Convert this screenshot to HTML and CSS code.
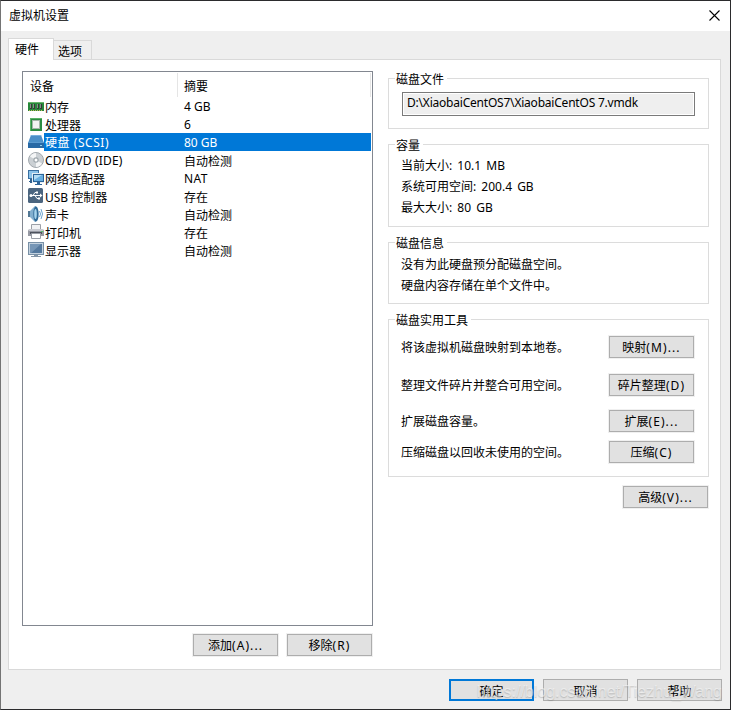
FILE: index.html
```html
<!DOCTYPE html>
<html lang="zh-CN">
<head>
<meta charset="utf-8">
<title>虚拟机设置</title>
<link rel="stylesheet" href="styles.css">
</head>
<body>
<div class="window">
  <header class="titlebar">
    <h1>虚拟机设置</h1>
    <svg class="close" viewBox="0 0 11 11" width="11" height="11"><path d="M.5 .5l10 10M10.500 .5l-10 10"/></svg>
  </header>
  <nav class="tabs">
    <div class="tab active">硬件</div>
    <div class="tab">选项</div>
  </nav>
  <main class="panel">
    <section class="devices">
      <div class="list">
        <div class="list-head"><span class="col-name">设备</span><span class="col-sum">摘要</span></div>
        <div class="row">
          <svg viewBox="0 0 16 16"><path fill="#27873b" d="M0 4h16v9H0z"/><path fill="#67b66b" d="M0 4h16v1H0z"/><path fill="#343b36" d="M2 6h2v5H2zM5 6h2v5H5zM9 6h2v5H9zM12 6h2v5h-2z"/><path fill="#849187" d="M2 6h1v4H2zM5 6h1v4H5zM9 6h1v4H9zM12 6h1v4h-1z"/><path stroke="#bdb75c" stroke-dasharray="1 1" d="M1 12.500h14"/></svg>
          <span class="name">内存</span><span class="sum latin">4 GB</span></div>
        <div class="row">
          <svg viewBox="0 0 16 16"><path fill="#2c8d42" d="M2 2h12v13H2z"/><path fill="#5bb267" d="M2 2h12v1H3v12H2z"/><path fill="#a4b5a8" d="M4 4h8v9H4z"/><path fill="#f2f3f2" d="M5 5h6v7H5z"/></svg>
          <span class="name">处理器</span><span class="sum latin">6</span></div>
        <div class="row selected">
          <svg viewBox="0 0 16 16"><path fill="#4b8fc8" d="M3 1h10l3 8H0z"/><path fill="#77afdd" d="M3 1h10l.5 1h-11z"/><path fill="#2869a5" d="M0 8h16v6H0z"/><path fill="#5b9bd0" d="M0 8h16v1H0z"/><path fill="#8bd2ed" d="M12 11h2v1h-2z"/></svg>
          <span class="name latin scsi">硬盘 (SCSI)</span><span class="sum latin">80 GB</span></div>
        <div class="row">
          <svg viewBox="0 0 16 16"><circle cx="8" cy="8" r="7.500" fill="#cbd0d4" stroke="#a2a8ad"/><path fill="#f4f5f6" d="M8 8L2 4.500A7 7 0 0 1 8 1zM8 8l6 3.500A7 7 0 0 1 8 15z"/><circle cx="8" cy="8" r="2.700" fill="#9fa7ad"/><circle cx="8" cy="8" r="1.500" fill="#fff"/></svg>
          <span class="name latin cd">CD/DVD (IDE)</span><span class="sum">自动检测</span></div>
        <div class="row">
          <svg viewBox="0 0 16 16"><path fill="#386fa2" d="M0 0h11v9H0z"/><path fill="#8bc2e9" d="M1 1h9v7H1z"/><path fill="#30618f" d="M2 9h2v2h2v2H2v-1H1v-1h1z"/><path fill="#e5eef5" d="M4 3h12v10H4z"/><path fill="#2c6498" d="M5 4h11v8H5zM9 12h3v2h2v1H7v-1h2z"/><path fill="#67aee0" d="M6 5h9v6H6z"/><path fill="#b2dcf5" d="M6 5h8l-8 5z"/></svg>
          <span class="name">网络适配器</span><span class="sum latin nat">NAT</span></div>
        <div class="row">
          <svg viewBox="0 0 16 16"><rect width="15" height="15" x="0" y="0" rx="1.500" fill="#4b657f"/><path fill="none" stroke="#fff" d="M2 7.500h11M5 7.500l2-3h2M7 7.500l2 3h2"/><circle cx="3" cy="7.500" r="1.500" fill="#fff"/><path fill="#fff" d="M12 5.500l2.500 2-2.500 2zM8 3.500h2v2H8zM10 9.500h2v2h-2z"/></svg>
          <span class="name">USB 控制器</span><span class="sum">存在</span></div>
        <div class="row">
          <svg viewBox="0 0 16 16"><path fill="#517794" d="M0 5h3v6H0z"/><path fill="#83afcf" d="M2 5l5-5h1v16H7l-5-5z"/><ellipse cx="8" cy="8" rx="2.700" ry="7.500" fill="#316b98"/><ellipse cx="7.500" cy="8" rx="1.300" ry="5" fill="#a7d4ed"/><path fill="none" stroke="#6ca4cf" d="M11.500 5q2 3 0 6M13 3q3 5 0 10"/></svg>
          <span class="name">声卡</span><span class="sum">自动检测</span></div>
        <div class="row">
          <svg viewBox="0 0 16 16"><path fill="#f1f2f4" stroke="#9ca0a7" d="M3.500 .5h9v5h-9z"/><path fill="#9699a3" d="M1 5h14l1 2v5H0V7z"/><path fill="#c8cad1" d="M1 5h14v2H1z"/><path fill="#4e535d" d="M2 8h12v2H2z"/><path fill="#fff" stroke="#9a9ea6" d="M3.500 9.500h9v5h-9z"/><path fill="#52c569" d="M13 7h2v1h-2z"/></svg>
          <span class="name">打印机</span><span class="sum">存在</span></div>
        <div class="row">
          <svg viewBox="0 0 16 16"><path fill="#7890a6" d="M0 0h16v13H0z"/><path fill="#c4d2df" d="M1 1h14v11H1z"/><path fill="#55799e" d="M2 2h12v9H2z"/><path fill="#7696b6" d="M2 2h11L3 11H2z"/><path fill="#8496a8" d="M6 13h4v1h3v1H3v-1h3z"/></svg>
          <span class="name">显示器</span><span class="sum">自动检测</span></div>
      </div>
      <div class="actions"><button>添加<span>(A)...</span></button><button>移除<span>(R)</span></button></div>
    </section>
    <section class="details">
      <div class="group file"><h2>磁盘文件</h2><div class="path"><span>D:\XiaobaiCentOS7\XiaobaiCentOS 7.vmdk</span></div></div>
      <div class="group capacity"><h2>容量</h2><p>当前大小: 10.1 MB</p><p>系统可用空间: 200.4 GB</p><p>最大大小: 80 GB</p></div>
      <div class="group info"><h2>磁盘信息</h2><p>没有为此硬盘预分配磁盘空间。</p><p>硬盘内容存储在单个文件中。</p></div>
      <div class="group tools"><h2>磁盘实用工具</h2>
        <div class="tool"><span>将该虚拟机磁盘映射到本地卷。</span><button>映射<span>(M)...</span></button></div>
        <div class="tool"><span>整理文件碎片并整合可用空间。</span><button>碎片整理<span>(D)</span></button></div>
        <div class="tool"><span>扩展磁盘容量。</span><button>扩展<span>(E)...</span></button></div>
        <div class="tool"><span>压缩磁盘以回收未使用的空间。</span><button>压缩<span>(C)</span></button></div>
      </div>
      <button class="advanced">高级<span>(V)...</span></button>
    </section>
  </main>
  <footer class="footer"><button class="default">确定</button><button>取消</button><button>帮助</button>
    <span class="watermark">https://blog.csdn.net/Tiezhu_Wang</span></footer>
</div>
</body>
</html>
```
FILE: styles.css
```css
* { box-sizing: border-box; }
body { margin: 0; color: #000; font: 12px/18px "Noto Sans", "Noto Sans CJK SC", sans-serif; }
h1, h2, p { margin: 0; font-size: 12px; font-weight: 400; }
span, p, h1, h2, button { white-space: nowrap; }
.window { width: 731px; height: 710px; background: #efefef; border: 1px solid #2b2b2d; border-left-color: #747474; overflow: hidden; }
.titlebar { height: 30px; background: #fff; display: flex; justify-content: space-between; align-items: center; padding: 0 10px 1px 8px; }
.close { fill: none; stroke: #000; stroke-width: 1.1; }
.tabs { display: flex; align-items: flex-end; height: 28px; padding-left: 7px; position: relative; z-index: 1; }
.tab { width: 38px; height: 20px; padding-left: 4px; border: 1px solid #d9d9d9; border-left: 0; line-height: 21px; margin-bottom: -1px; }
.tab.active { width: 46px; height: 22px; padding-left: 6px; background: #fff; border: 1px solid #d9d9d9; border-bottom: 0; line-height: 21px; }
.panel { width: 713px; height: 611px; margin-left: 7px; background: #fff; border: 1px solid #d9d9d9; display: flex; gap: 15px; padding: 11px 11px 0 13px; }
.devices { width: 351px; }
.list { height: 555px; border: 1px solid #828790; padding: 1px; }
.list-head { display: flex; height: 24px; line-height: 28px; }
.col-name { width: 154px; padding-left: 6px; border-right: 1px solid #e5e5e5; }
.col-sum { flex: 1; padding-left: 6px; border-right: 1px solid #e5e5e5; }
.row { display: flex; height: 18px; padding-left: 4px; line-height: 22px; }
.row svg { width: 16px; height: 16px; margin-top: 1px; flex: none; }
.name { width: 134px; padding-left: 1px; height: 18px; }
.sum { flex: 1; padding-left: 6px; height: 18px; }
.latin { line-height: 20px; }
.selected .name, .selected .sum { background: #0078d7; color: #fff; }
.scsi { letter-spacing: .55px; }
.cd { letter-spacing: .2px; }
.nat { letter-spacing: .4px; }
.actions { display: flex; justify-content: flex-end; gap: 9px; margin: 8px 1px 0 0; }
button { width: 85px; height: 22px; flex: none; padding: 0; border: 1px solid #adadad; background: #e1e1e1; box-shadow: 0 0 0 1px #f0f0f0; color: #000; font: inherit; line-height: 21px; }
button span { letter-spacing: 1.1px; }
.details { width: 321px; padding-top: 7px; display: flex; flex-direction: column; }
.group { border: 1px solid #dcdcdc; padding-left: 12px; }
.group h2 { width: fit-content; height: 18px; line-height: 20px; margin: -9px 0 0 -6px; padding: 0 3px 0 1px; background: #fff; }
.file { height: 51px; margin-bottom: 15px; }
.path { width: 293px; height: 24px; margin: 4px 0 0 1px; padding-left: 4px; border: 1px solid #7a7a7a; box-shadow: inset 0 0 0 1px #fff; background: #efefef; line-height: 20px; letter-spacing: -.21px; }
.capacity { height: 83px; margin-bottom: 15px; word-spacing: 2px; }
.group p { line-height: 21px; }
.capacity h2 { margin-bottom: 1px; }
.info { height: 62px; margin-bottom: 15px; }
.info h2 { margin-bottom: 2px; }
.tools { height: 158px; margin-bottom: 9px; }
.tools h2 { margin-bottom: 7px; }
.tool { display: flex; justify-content: space-between; align-items: center; height: 22px; padding-right: 14px; margin-bottom: 16px; }
.tool > span { padding-top: 2px; }
.tool:nth-of-type(2) { margin-bottom: 14px; }
.tool:nth-of-type(3) { margin-bottom: 9px; }
.advanced { align-self: flex-end; margin-right: 1px; }
.footer { display: flex; justify-content: flex-end; gap: 9px; padding: 9px 8px 0 0; position: relative; }
.footer button { box-shadow: none; line-height: 23px; }
.footer .default { border: 2px solid #0078d7; line-height: 21px; }
.watermark { position: absolute; right: 8px; top: 12px; font: 16px/19px "Liberation Sans", sans-serif; color: rgba(248,248,248,.6); text-shadow: 0 1px 1px rgba(110,110,110,.35); }
```
